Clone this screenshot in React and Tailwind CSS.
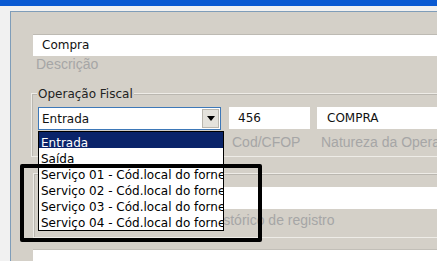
import React from "react";

const items = [
  "Entrada",
  "Saída",
  "Serviço 01 - Cód.local do fornecedor",
  "Serviço 02 - Cód.local do fornecedor",
  "Serviço 03 - Cód.local do fornecedor",
  "Serviço 04 - Cód.local do fornecedor",
];

function App() {
  const ui = { fontFamily: '"DejaVu Sans", Verdana, sans-serif' };
  const lbl = { fontFamily: '"Liberation Sans", Arial, sans-serif' };

  return (
    <div className="relative w-[437px] h-[261px] overflow-hidden bg-[#f1f1f1] flex flex-col text-[12px] text-[#111]" style={ui}>
      <div className="h-[6px] shrink-0 bg-[#0a5ad2]" />
      <div className="flex-1 flex pt-[5px] pl-[10px] min-h-0">
        <div className="flex-1 min-w-0 flex flex-col border-l border-t border-[#7f9db9] bg-[#d4d0c8] pl-[20px] pt-[22px]">
          {/* descricao */}
          <div className="ml-[2px] h-[22px] shrink-0 bg-white border-t border-[#bdbab3] pl-[9px] leading-[21px]">Compra</div>
          <div className="ml-[5px] leading-[16px] text-[14px] text-[#a6a6a6]" style={lbl}>Descrição</div>

          {/* operacao fiscal */}
          <div className="relative mt-[21px] shrink-0 border-t border-l border-b border-[#eeece7] shadow-[inset_1px_1px_0_#bab7b0]">
            <span className="absolute left-[5px] -top-[7px] px-[1px] leading-[14px] bg-[#d4d0c8] text-[#222]">Operação Fiscal</span>
            <div className="pt-[13px] pl-[6px] pb-[6px]">
              <div className="flex items-start">
                <div className="w-[183px] h-[23px] flex border border-[#3d78b8] bg-white">
                  <div className="flex-1 pl-[3px] leading-[22px]">Entrada</div>
                  <div className="w-[17px] m-[1px] flex items-center justify-center bg-[#e4e2dc] border border-[#b9b6ae]">
                    <svg width="8" height="5" viewBox="0 0 8 5">
                      <polygon points="0,0 8,0 4,5" fill="#000" />
                    </svg>
                  </div>
                </div>
                <div className="ml-[8px] w-[81px] h-[22px] bg-white pl-[9px] leading-[22px]">456</div>
                <div className="ml-[7px] flex-1 h-[22px] bg-white pl-[10px] leading-[22px]">COMPRA</div>
              </div>
              <div className="flex mt-[4px] leading-[16px] text-[14px] text-[#a6a6a6] whitespace-nowrap" style={lbl}>
                <div className="w-[191px] shrink-0" />
                <div className="w-[81px] shrink-0 pl-[3px]">Cod/CFOP</div>
                <div className="ml-[7px] pl-[4px]">Natureza da Operação</div>
              </div>
            </div>
          </div>

          {/* historico */}
          <div className="mt-[16px] ml-[2px] shrink-0 border-t border-l border-b border-[#eeece7] shadow-[inset_1px_1px_0_#bab7b0] pt-[13px] pl-[4px] pb-[9px]">
            <div className="h-[22px] bg-white" />
            <div className="mt-[3px] pl-[172px] leading-[16px] text-[14px] text-[#a6a6a6] whitespace-nowrap" style={lbl}>Histórico de registro</div>
          </div>

          <div className="mt-[11px] ml-[2px] h-[30px] shrink-0 bg-white border-t border-[#c2bfb8]" />
        </div>
      </div>

      {/* open dropdown list */}
      <div className="absolute left-[38px] top-[131px] w-[186px] h-[100px] border border-black bg-white overflow-hidden">
        {items.map((t, i) => (
          <div
            key={t}
            className={
              "h-[16px] pl-[2px] leading-[22px] whitespace-nowrap " +
              (i === 0 ? "bg-[#0a246a] text-white" : "text-black")
            }
          >
            {t}
          </div>
        ))}
      </div>

      {/* highlight frame */}
      <div className="absolute left-[20px] top-[164px] w-[242px] h-[78px] border-[4px] border-black rounded-[2px]" />
    </div>
  );
}

export default App;
